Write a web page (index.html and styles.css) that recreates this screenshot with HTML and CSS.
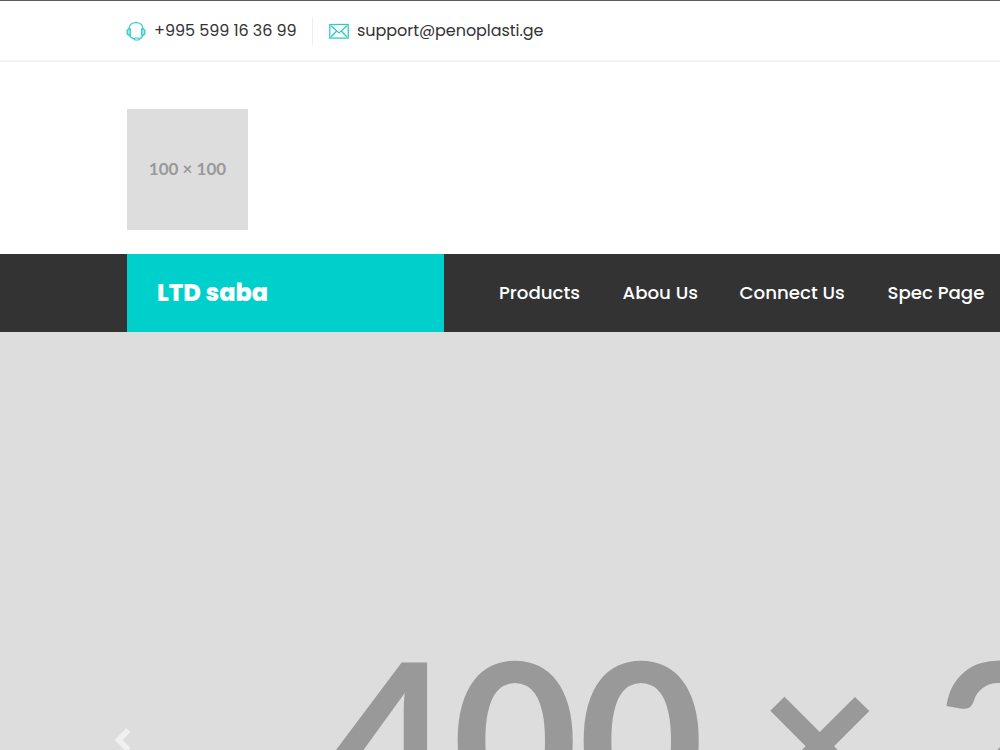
FILE: index.html
```
<!DOCTYPE html>
<html lang="en">
<head>
    <meta charset="UTF-8">
    <meta name="viewport" content="width=device-width, initial-scale=1.0">
    <title>LTD saba</title>
    <link rel="stylesheet" href="styles.css">
</head>
<body>
    <div class="top-bar">
        <a class="contact phone" href="#">
            <svg width="20" height="20" viewBox="0 0 20 20" fill="none" stroke="#2cccc8" stroke-width="1.2">
                <path d="M3 8C3 4 6 1.600 10 1.600S17 4 17 8"/>
                <path d="M4.300 7.800v6.400H3.200C1.700 14 1 12.800 1 11s.8-3 2.200-3.200zM15.700 7.800v6.400h1.100c1.500-.2 2.200-1.400 2.200-3.200s-.8-3-2.200-3.200z" fill="#a5e9e7"/>
                <path d="M3.400 14.200c.8 2 2.600 3.200 5 3.700M16.800 14.200c-.4 1.900-1.500 3.200-3.600 3.700"/>
                <rect x="8.300" y="17" width="5" height="2" rx="1"/>
            </svg>
            <span>+995 599 16 36 99</span>
        </a>
        <a class="contact mail" href="#">
            <svg width="20" height="16" viewBox="0 0 20 16" fill="none" stroke="#2cccc8" stroke-width="1.300">
                <rect x=".8" y="1.500" width="18.400" height="13.600"/>
                <path d="M2 2.700l8 7.200 8-7.200M2 14l5.700-6M18 14l-5.700-6"/>
            </svg>
            <span>support@penoplasti.ge</span>
        </a>
    </div>

    <header class="header">
        <div class="logo">100 × 100</div>
    </header>

    <nav class="navbar">
        <div class="brand">LTD saba</div>
        <a class="link products" href="#">Products</a>
        <a class="link about" href="#">Abou Us</a>
        <a class="link connect" href="#">Connect Us</a>
        <a class="link spec" href="#">Spec Page</a>
    </nav>

    <main class="slider">
        <svg class="prev" width="18" height="26" viewBox="0 0 18 26" fill="none" stroke="#f0f0f0" stroke-width="5.500">
            <path d="M15.500 3L5.500 13l10 10"/>
        </svg>
        <div class="slide">400 × 200</div>
    </main>
</body>
</html>
```
FILE: styles.css
```
* {
    box-sizing: border-box;
}

body {
    margin: 0;
    height: 750px;
    overflow: hidden;
    background-color: #fff;
    color: #333;
    font-family: 'Poppins', 'Inter', sans-serif;
}

a {
    color: inherit;
    text-decoration: none;
    white-space: nowrap;
}

.top-bar {
    display: flex;
    align-items: center;
    height: 62px;
    padding-left: 126px;
    border-top: 1px solid #5c5c5c;
    border-bottom: 2px solid #f3f3f3;
}

.contact {
    display: flex;
    align-items: center;
    gap: 8px;
    height: 28px;
    font-size: 16px;
    letter-spacing: -0.05px;
}

.phone {
    width: 187px;
    border-right: 1px solid #eee;
}

.mail {
    padding-left: 16px;
}

.header {
    height: 192px;
    padding: 47px 0 0 127px;
}

.logo {
    display: flex;
    align-items: center;
    justify-content: center;
    width: 121px;
    height: 121px;
    padding-bottom: 2px;
    background-color: #ddd;
    color: #999;
    font: bold 17px 'Lato', sans-serif;
}

.navbar {
    display: flex;
    align-items: center;
    height: 78px;
    padding-left: 127px;
    background-color: #333;
    color: #fff;
}

.brand {
    width: 317px;
    height: 78px;
    margin-right: 55px;
    padding-left: 30px;
    background-color: #00d0cc;
    font-size: 24px;
    font-weight: 800;
    line-height: 78px;
}

.link {
    flex-shrink: 0;
    padding-bottom: 2px;
    font-size: 18.2px;
    font-weight: 500;
}

.products {
    width: 123.5px;
}

.about {
    width: 117px;
}

.connect {
    width: 148px;
}

.slider {
    display: flex;
    align-items: center;
    height: 816px;
    padding-left: 113px;
    background-color: #ddd;
    overflow: hidden;
}

.prev {
    flex-shrink: 0;
}

.slide {
    flex-shrink: 0;
    margin-left: 195.5px;
    padding-bottom: 10px;
    color: #999;
    font: bold 217px/1 'Lato', sans-serif;
    white-space: nowrap;
}
```
